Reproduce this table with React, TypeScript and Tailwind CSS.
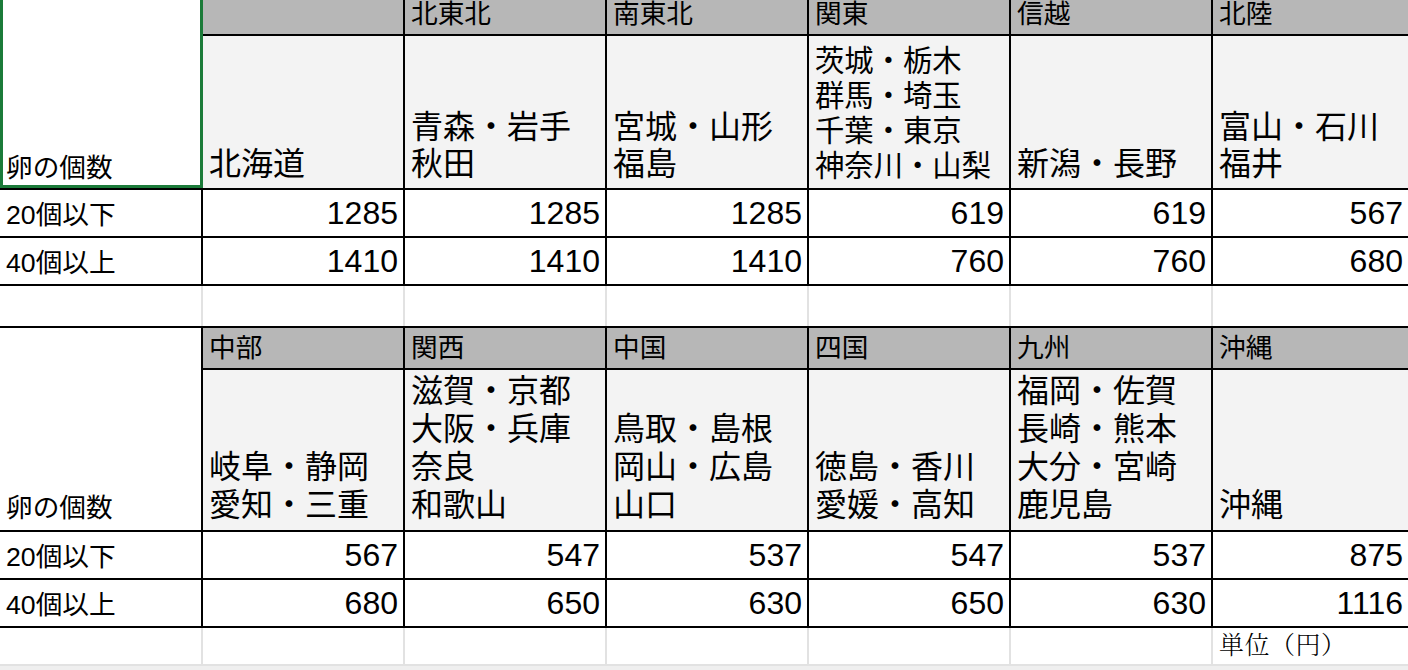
import React from "react";

type Col = { header: string; lines: string[]; small?: boolean };

const top: Col[] = [
  { header: "", lines: ["北海道"] },
  { header: "北東北", lines: ["青森・岩手", "秋田"] },
  { header: "南東北", lines: ["宮城・山形", "福島"] },
  { header: "関東", lines: ["茨城・栃木", "群馬・埼玉", "千葉・東京", "神奈川・山梨"], small: true },
  { header: "信越", lines: ["新潟・長野"] },
  { header: "北陸", lines: ["富山・石川", "福井"] },
];

const bottom: Col[] = [
  { header: "中部", lines: ["岐阜・静岡", "愛知・三重"] },
  { header: "関西", lines: ["滋賀・京都", "大阪・兵庫", "奈良", "和歌山"] },
  { header: "中国", lines: ["鳥取・島根", "岡山・広島", "山口"] },
  { header: "四国", lines: ["徳島・香川", "愛媛・高知"] },
  { header: "九州", lines: ["福岡・佐賀", "長崎・熊本", "大分・宮崎", "鹿児島"] },
  { header: "沖縄", lines: ["沖縄"] },
];

const topRows: [string, string[]][] = [
  ["20個以下", ["1285", "1285", "1285", "619", "619", "567"]],
  ["40個以上", ["1410", "1410", "1410", "760", "760", "680"]],
];

const bottomRows: [string, string[]][] = [
  ["20個以下", ["567", "547", "537", "547", "537", "875"]],
  ["40個以上", ["680", "650", "630", "650", "630", "1116"]],
];

function colClass(i: number) {
  return i < 5 ? "w-[202px] shrink-0" : "flex-1 min-w-0";
}

function HeaderBlock({
  cols,
  headerH,
  subH,
  labelPb,
  variant,
}: {
  cols: Col[];
  headerH: string;
  subH: string;
  labelPb: string;
  variant: "top" | "bottom";
}) {
  return (
    <div className="flex border-b-2 border-black">
      <div
        className={`w-[201px] shrink-0 flex items-end pl-[6px] ${labelPb} text-[26.67px] leading-[27px] bg-white`}
      >
        卵の個数
      </div>
      <div className="flex-1 flex flex-col min-w-0">
        <div className={`flex ${headerH} border-b-2 border-black bg-[#b7b7b7]`}>
          {cols.map((c, i) => (
            <div
              key={i}
              className={`${colClass(i)} border-l-2 border-black flex items-end pl-[6px] pb-[6px] text-[26.67px] leading-[27px] whitespace-nowrap`}
            >
              {c.header}
            </div>
          ))}
        </div>
        <div className={`flex ${subH} bg-[#f3f3f3]`}>
          {cols.map((c, i) => (
            <div
              key={i}
              className={`${colClass(i)} border-l-2 border-black flex flex-col justify-end pl-[6px] whitespace-nowrap overflow-hidden ${
                c.small
                  ? "text-[29.33px] leading-[35px] pb-[5px]"
                  : variant === "top"
                  ? "text-[32px] leading-[37px] pb-[5px]"
                  : "text-[32px] leading-[38px] pb-[6px]"
              }`}
            >
              {c.lines.map((l, j) => (
                <div key={j}>{l}</div>
              ))}
            </div>
          ))}
        </div>
      </div>
    </div>
  );
}

function DataRow({ label, values }: { label: string; values: string[] }) {
  return (
    <div className="flex h-[48px] border-b-2 border-black">
      <div className="w-[201px] shrink-0 flex items-end pl-[6px] pb-[7px] text-[26.67px] leading-[27px] whitespace-nowrap">
        {label}
      </div>
      {values.map((v, i) => (
        <div
          key={i}
          className={`${colClass(i)} border-l-2 border-black flex items-end justify-end pr-[5px] pb-[7px] text-[32px] leading-[32px]`}
        >
          {v}
        </div>
      ))}
    </div>
  );
}

function EmptyRow({
  h,
  bottomBorder,
  lastText,
}: {
  h: string;
  bottomBorder: string;
  lastText?: string;
}) {
  return (
    <div className={`flex ${h} border-b-2 ${bottomBorder}`}>
      <div className="w-[201px] shrink-0" />
      {[0, 1, 2, 3, 4, 5].map((i) => (
        <div
          key={i}
          className={`${colClass(i)} border-l-2 border-[#e2e2e2] flex items-end pl-[6px] pb-[3px]`}
        >
          {i === 5 && lastText ? (
            <span className="font-['Liberation_Serif','Noto_Serif_CJK_JP','Noto_Sans_CJK_JP',serif] text-[25px] leading-[30px] font-light tracking-[0.5px] whitespace-nowrap">
              {lastText}
            </span>
          ) : null}
        </div>
      ))}
    </div>
  );
}

export default function App() {
  return (
    <div className="relative w-[1408px] h-[670px] overflow-hidden bg-white text-black font-['Liberation_Sans','Noto_Sans_CJK_JP',sans-serif]">
      <HeaderBlock cols={top} headerH="h-[36px]" subH="h-[152px]" labelPb="pb-[6px]" variant="top" />
      {topRows.map(([l, v]) => (
        <DataRow key={"t" + l} label={l} values={v} />
      ))}
      <EmptyRow h="h-[42px]" bottomBorder="border-black" />
      <HeaderBlock cols={bottom} headerH="h-[42px]" subH="h-[160px]" labelPb="pb-[8px]" variant="bottom" />
      {bottomRows.map(([l, v]) => (
        <DataRow key={"b" + l} label={l} values={v} />
      ))}
      <EmptyRow h="h-[38px]" bottomBorder="border-[#e2e2e2]" lastText="単位（円）" />
      <div className="h-[20px] bg-[#efefef]" />
      <div className="absolute left-0 top-0 w-[203px] h-[188px] border-[3px] border-t-0 border-[#1b7b39] pointer-events-none" />
    </div>
  );
}
